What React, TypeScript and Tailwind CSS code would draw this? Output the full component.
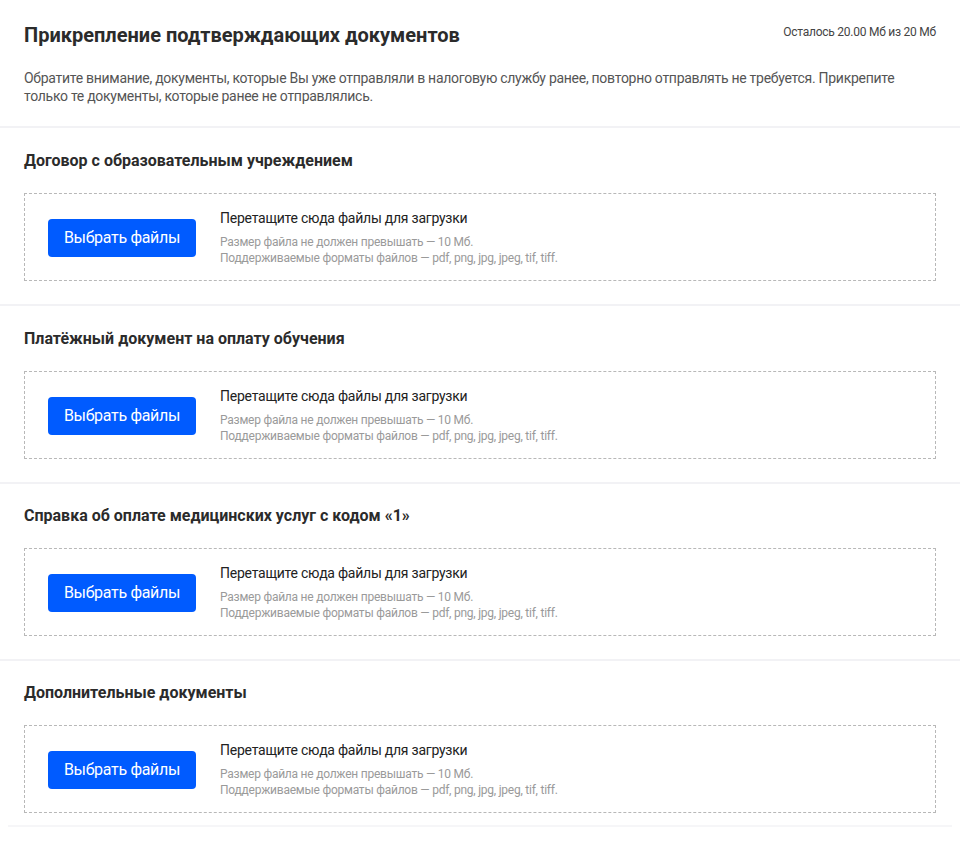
import React from "react";

const sections = [
  "Договор с образовательным учреждением",
  "Платёжный документ на оплату обучения",
  "Справка об оплате медицинских услуг с кодом «1»",
  "Дополнительные документы",
];

function Uploader() {
  return (
    <div className="flex items-center border border-dashed border-[#b8b8b8] px-[23px] pt-[15px] pb-[14px]">
      <button className="h-[38px] w-[148px] shrink-0 rounded-[4px] bg-[#005bff] text-[16px] tracking-[-0.02em] text-white">
        Выбрать файлы
      </button>
      <div className="ml-[24px] flex flex-col tracking-[-0.015em]">
        <div className="text-[14px] leading-[18px] text-[#222]">Перетащите сюда файлы для загрузки</div>
        <div className="mt-[7px] text-[12px] leading-[16px] text-[#9a9a9a]">
          Размер файла не должен превышать — 10 Мб.
        </div>
        <div className="text-[12px] leading-[16px] text-[#9a9a9a]">
          Поддерживаемые форматы файлов — pdf, png, jpg, jpeg, tif, tiff.
        </div>
      </div>
    </div>
  );
}

export default function App() {
  return (
    <div className="min-h-[849px] bg-white font-['Roboto',sans-serif]">
      <div className="px-[24px] pt-[23px] pb-[21px]">
        <div className="flex items-start justify-between">
          <h1 className="text-[20px] font-bold leading-[24px] text-[#2b2b2b]">
            Прикрепление подтверждающих документов
          </h1>
          <div className="pt-[1px] text-[12px] leading-[16px] tracking-[-0.02em] text-[#444]">
            Осталось 20.00 Мб из 20 Мб
          </div>
        </div>
        <p className="mt-[22px] text-[14px] leading-[18px] tracking-[-0.02em] text-[#555]">
          Обратите внимание, документы, которые Вы уже отправляли в налоговую службу ранее, повторно отправлять не
          требуется. Прикрепите только те документы, которые ранее не отправлялись.
        </p>
      </div>
      {sections.map((s, i) => (
        <div
          key={s}
          className={
            i === sections.length - 1
              ? "border-t-2 border-[#f2f2f5] px-[24px] pt-[22px] pb-[12px]"
              : i === 2
              ? "border-t-2 border-[#f2f2f5] px-[24px] pt-[22px] pb-[23px]"
              : "border-t-2 border-[#f2f2f5] px-[24px] pt-[23px] pb-[23px]"
          }
        >
          <h2 className="mb-[22px] text-[16px] font-bold leading-[20px] text-[#2b2b2b]">{s}</h2>
          <Uploader />
        </div>
      ))}
      <div className="mx-[8px] h-[2px] bg-[#f6f6f8]" />
    </div>
  );
}
